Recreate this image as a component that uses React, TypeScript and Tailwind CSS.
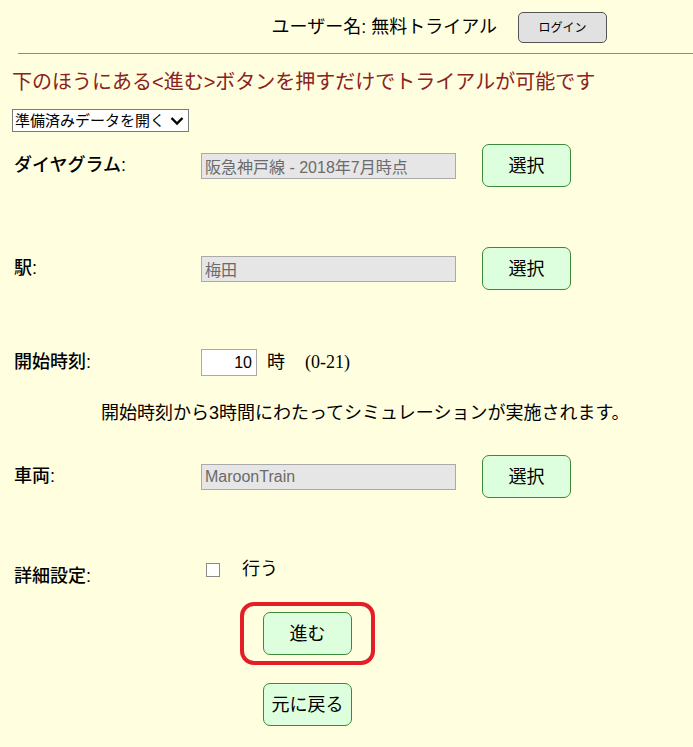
const jp = "font-['Liberation_Sans','Noto_Sans_CJK_JP',sans-serif]";

function PickButton({ label }: { label: string }) {
  return (
    <button className="w-[89px] h-[43px] bg-[#ddffdd] border border-[#3a8a3a] rounded-[7px] text-[18px] text-black leading-none">
      {label}
    </button>
  );
}

function ReadonlyField({ value }: { value: string }) {
  return (
    <input
      type="text"
      readOnly
      value={value}
      className="w-[255px] h-[26px] bg-[#e6e6e6] border border-[#aaaaaa] px-[3px] text-[16px] text-[#6b6b6b] outline-none"
    />
  );
}

function Row({ label, children }: { label: string; children: React.ReactNode }) {
  return (
    <div className="flex items-center h-[43px]">
      <div className="w-[201px] pl-[14px] text-[18px] font-medium text-black">{label}</div>
      {children}
    </div>
  );
}

export default function App() {
  return (
    <div className={`${jp} bg-[#ffffe0] min-h-screen w-full text-black`}>
      <div className="flex items-center justify-end gap-[21px] pr-[86px] pt-[12px]">
        <span className="text-[18px]">ユーザー名: 無料トライアル</span>
        <button className="w-[89px] h-[31px] bg-[#e1e1e1] border border-[#555555] rounded-[5px] text-[12px] leading-none">
          ログイン
        </button>
      </div>
      <div className="ml-[18px] mt-[10px] border-t border-[#8c8c8c]" />
      <div className="pl-[12px] mt-[14px] h-[28px] flex items-center text-[20px] text-[#8b2222]">
        下のほうにある&lt;進む&gt;ボタンを押すだけでトライアルが可能です
      </div>
      <div className="ml-[12px] mt-[13px] w-[177px] h-[23px] flex items-center border border-[#7a7a7a] bg-white">
        <select className="appearance-none bg-transparent flex-1 pl-[2px] text-[15px] outline-none leading-none">
          <option>準備済みデータを開く</option>
        </select>
        <svg width="14" height="10" viewBox="0 0 14 10" className="mr-[4px]">
          <path d="M1.5 2 L7 7.5 L12.5 2" fill="none" stroke="#000" strokeWidth="2.4" />
        </svg>
      </div>

      <div className="mt-[12px]">
        <Row label="ダイヤグラム:">
          <ReadonlyField value="阪急神戸線 - 2018年7月時点" />
          <div className="ml-[26px]">
            <PickButton label="選択" />
          </div>
        </Row>
      </div>

      <div className="mt-[60px]">
        <Row label="駅:">
          <ReadonlyField value="梅田" />
          <div className="ml-[26px]">
            <PickButton label="選択" />
          </div>
        </Row>
      </div>

      <div className="mt-[51px]">
        <Row label="開始時刻:">
          <input
            type="text"
            defaultValue="10"
            className="w-[56px] h-[27px] bg-white border border-[#a9a9a9] px-[4px] text-right text-[16px] outline-none"
          />
          <span className="ml-[10px] text-[18px]">時</span>
          <span className="ml-[20px] text-[18px] font-['Liberation_Serif',serif]">(0-21)</span>
        </Row>
      </div>

      <div className="pl-[101px] mt-[15px] h-[28px] flex items-center text-[18px]">
        開始時刻から3時間にわたってシミュレーションが実施されます。
      </div>

      <div className="mt-[28px]">
        <Row label="車両:">
          <ReadonlyField value="MaroonTrain" />
          <div className="ml-[26px]">
            <PickButton label="選択" />
          </div>
        </Row>
      </div>

      <div className="mt-[57px]">
        <Row label="詳細設定:">
          <label className="flex items-center -mt-[14px]">
            <input
              type="checkbox"
              className="appearance-none ml-[5px] w-[14px] h-[14px] m-0 bg-white border border-[#8a8a8a]"
            />
            <span className="ml-[22px] text-[18px]">行う</span>
          </label>
        </Row>
      </div>

      <div className="ml-[240px] mt-[4px] w-fit border-4 border-[#e41e26] rounded-[14px] px-[19px] py-[6px]">
        <PickButton label="進む" />
      </div>

      <div className="ml-[263px] mt-[18px] pb-[22px]">
        <PickButton label="元に戻る" />
      </div>
    </div>
  );
}
